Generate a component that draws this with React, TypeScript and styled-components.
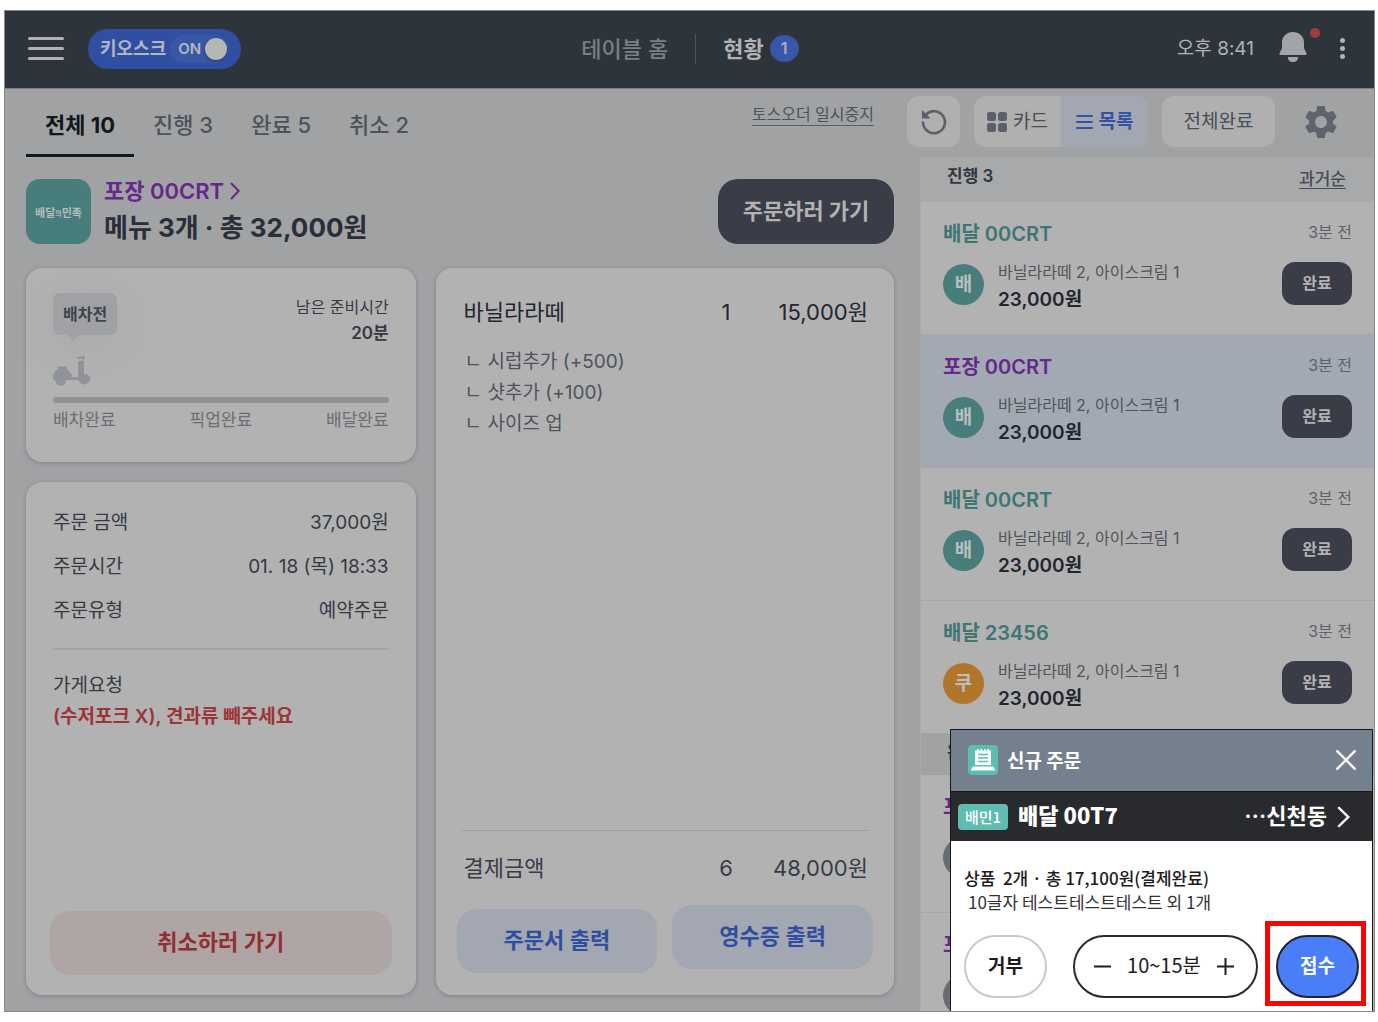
import React from "react";
import styled, { createGlobalStyle, css } from "styled-components";
import { MdSettings } from "react-icons/md";

const GlobalStyle = createGlobalStyle`
  *, *::before, *::after { box-sizing: border-box; }
  body {
    margin: 0;
    background: #ffffff;
    color: #2c313b;
    font-family: Inter, "Noto Sans CJK KR", sans-serif;
    overflow: hidden;
  }
  button, input { font: inherit; color: inherit; }
  button { border: 0; background: none; padding: 0; cursor: pointer; white-space: nowrap; }
  h1, h2, h3, p, ul, dl, dd { margin: 0; padding: 0; font-size: inherit; font-weight: inherit; }
  ul { list-style: none; }
`;

const Shell = styled.div`
  position: relative;
  display: flex;
  flex-direction: column;
  height: calc(100vh - 20px);
  margin: 10px 3px 10px 4px;
  border: 1px solid #87898b;
  background: #a1a2a4;
  overflow: hidden;
`;

/* ---------- top bar ---------- */

const TopBar = styled.header`
  display: grid;
  grid-template-columns: 1fr auto 1fr;
  align-items: center;
  height: 78px;
  padding: 0 22px 2px 23px;
  background: #2e343c;
  border-bottom: 1px solid #7b7f85;
`;

const TopLeft = styled.div`
  display: flex;
  align-items: center;
  gap: 24px;
`;

const MenuButton = styled.button`
  display: grid;
  gap: 7px;
  width: 36px;

  span {
    height: 3px;
    border-radius: 2px;
    background: #b2b2b2;
  }
`;

const KioskSwitch = styled.label`
  display: flex;
  align-items: center;
  gap: 4px;
  height: 40px;
  padding: 0 12px;
  border-radius: 20px;
  background: #304fa2;
  color: #b2b6c2;
  font-size: 18px;
  font-weight: 700;
  line-height: 24px;
  cursor: pointer;
`;

const SwitchTrack = styled.span`
  display: flex;
  align-items: center;
  gap: 4px;
  height: 28px;
  padding: 0 2px 0 8px;
  border-radius: 14px;
  background: #3858a6;
  font-size: 15px;
  font-weight: 600;
`;

const SwitchInput = styled.input`
  appearance: none;
  width: 22px;
  height: 22px;
  margin: 0;
  border-radius: 50%;
  background: #b5b5b5;
  box-shadow: 0 1px 3px rgba(0, 0, 0, 0.4);
`;

const TopNav = styled.nav`
  display: flex;
  align-items: center;
  font-size: 22px;
  line-height: 30px;
`;

const NavLink = styled.a<{ $active?: boolean }>`
  display: flex;
  align-items: center;
  gap: 6px;
  padding: 0 27px;
  color: ${(p) => (p.$active ? "#b2b2b2" : "#7b7f85")};
  font-weight: ${(p) => (p.$active ? 700 : 500)};
  text-decoration: none;

  & + & {
    border-left: 1px solid #4a5059;
  }
`;

const Count = styled.span`
  width: 29px;
  height: 27px;
  border-radius: 50%;
  background: #3857a8;
  color: #a9b0c4;
  font-size: 16px;
  font-weight: 600;
  line-height: 27px;
  text-align: center;
`;

const TopRight = styled.div`
  display: flex;
  align-items: center;
  justify-content: flex-end;
  color: #b2b2b2;
`;

const Clock = styled.time`
  font-size: 19px;
  line-height: 26px;
`;

const BellButton = styled.button`
  position: relative;
  display: flex;
  margin: 0 33px 4px 25px;

  &::after {
    content: "";
    position: absolute;
    top: -4px;
    right: -13px;
    width: 10px;
    height: 10px;
    border-radius: 50%;
    background: #a03c3e;
  }
`;

const MoreButton = styled.button`
  display: grid;
  gap: 3px;
  margin-right: 7px;

  span {
    width: 5px;
    height: 5px;
    border-radius: 50%;
    background: #b2b2b2;
  }
`;

/* ---------- filter bar ---------- */

const FilterBar = styled.div`
  display: flex;
  flex: none;
  justify-content: space-between;
  height: 69px;
  padding: 0 33px 0 21px;
  border-bottom: 1px solid #a6a7a9;
`;

const Tabs = styled.div`
  display: flex;
`;

const Tab = styled.button<{ $active?: boolean }>`
  padding: 7px 19px 0;
  border-bottom: 3px solid ${(p) => (p.$active ? "#14171c" : "transparent")};
  color: ${(p) => (p.$active ? "#14171c" : "#4d525b")};
  font-size: 22px;
  font-weight: ${(p) => (p.$active ? 700 : 500)};
  line-height: 30px;
`;

const Tools = styled.div`
  display: flex;
  align-items: flex-start;
  gap: 14px;
  padding-top: 7px;
`;

const PauseLink = styled.a`
  margin: 7px 19px 0 0;
  border-bottom: 1px solid #5a5f68;
  color: #4d525b;
  font-size: 16px;
  line-height: 22px;
  text-decoration: none;
`;

const ToolButton = styled.button<{ $width: number }>`
  display: flex;
  align-items: center;
  justify-content: center;
  width: ${(p) => p.$width}px;
  height: 51px;
  border-radius: 12px;
  background: #b0b0b0;
  color: #484d57;
  font-size: 19px;
  line-height: 26px;
`;

const Segmented = styled.div`
  display: flex;
  border-radius: 12px;
  background: #b0b0b0;
  overflow: hidden;
`;

const Segment = styled.button<{ $active?: boolean }>`
  display: flex;
  align-items: center;
  justify-content: center;
  gap: 6px;
  width: 87px;
  height: 51px;
  background: ${(p) => (p.$active ? "#a2a7b1" : "transparent")};
  color: ${(p) => (p.$active ? "#3453a6" : "#484d57")};
  font-size: 19px;
  font-weight: ${(p) => (p.$active ? 700 : 400)};
  line-height: 26px;
`;

const GearButton = styled.button`
  display: flex;
  margin: 6px 0 0 12px;
  color: #5f646c;
`;

/* ---------- layout of the two panes ---------- */

const Panes = styled.div`
  display: flex;
  flex: 1;
  min-height: 0;
`;

const Detail = styled.main`
  display: flex;
  flex: 1;
  flex-direction: column;
  gap: 23px;
  min-width: 0;
  padding: 21px 26px 16px 21px;
`;

const DetailHead = styled.div`
  display: flex;
  gap: 13px;
`;

const BrandMark = styled.div`
  display: flex;
  align-items: center;
  justify-content: center;
  width: 65px;
  height: 65px;
  border-radius: 14px;
  background: #477e7b;
  color: #b2bdbc;
  font-size: 11px;
  font-weight: 700;

  small {
    padding-top: 2px;
    font-size: 7px;
  }
`;

const OrderTitle = styled.div`
  flex: 1;
`;

const OrderLink = styled.a`
  display: flex;
  align-items: center;
  gap: 6px;
  color: #67288b;
  font-size: 22px;
  font-weight: 600;
  line-height: 24px;
  text-decoration: none;
`;

const OrderTotal = styled.h1`
  padding-top: 8px;
  color: #2a2e38;
  font-size: 26px;
  font-weight: 700;
  line-height: 34px;
`;

const DarkButton = styled.button<{ $large?: boolean }>`
  background: #3a3d48;
  color: #b2b2b2;
  font-weight: 700;
  ${(p) =>
    p.$large
      ? css`
          width: 176px;
          height: 65px;
          padding-bottom: 5px;
          border-radius: 20px;
          font-size: 22px;
        `
      : css`
          width: 70px;
          height: 43px;
          margin-top: 4px;
          padding-bottom: 3px;
          border-radius: 13px;
          font-size: 16px;
        `}
`;

const Cards = styled.div`
  display: grid;
  flex: 1;
  grid-template-columns: 17fr 20fr;
  gap: 20px;
  min-height: 0;
`;

const CardStack = styled.div`
  display: flex;
  flex-direction: column;
  gap: 20px;
`;

const Card = styled.section<{ $grow?: boolean }>`
  display: flex;
  flex-direction: column;
  ${(p) => p.$grow && "flex: 1;"}
  padding: 24px 24px 20px;
  border-radius: 16px;
  background: #b2b2b2;
  box-shadow: 0 1px 4px rgba(60, 65, 80, 0.35);
`;

/* ---------- delivery card ---------- */

const DeliveryTop = styled.div`
  display: flex;
  justify-content: space-between;
  align-items: flex-start;
  padding: 0 3px;
`;

const Bubble = styled.span`
  position: relative;
  margin-top: 1px;
  padding: 0 10px;
  border-radius: 7px;
  background: #9fa1a4;
  box-shadow: 0 10px 40px rgba(110, 130, 120, 0.16);
  color: #3f444e;
  font-size: 16px;
  font-weight: 700;
  line-height: 42px;

  &::after {
    content: "";
    position: absolute;
    top: 42px;
    left: 14px;
    border: 6px solid transparent;
    border-top-color: #9fa1a4;
    border-bottom: 0;
  }
`;

const Remaining = styled.p`
  padding-top: 2px;
  color: #353a44;
  font-size: 16px;
  line-height: 26px;
  text-align: right;

  strong {
    display: block;
    font-size: 17px;
    font-weight: 600;
  }
`;

const ScooterIcon = styled.svg`
  width: 38px;
  height: 31px;
  margin: 9px 0 11px 3px;
  fill: #919498;
`;

const Track = styled.div`
  height: 6px;
  margin: 0 3px;
  border-radius: 3px;
  background: #929397;
`;

const Steps = styled.ul`
  display: flex;
  justify-content: space-between;
  padding: 4px 3px 9px;
  color: #6b6f75;
  font-size: 17px;
  line-height: 26px;
`;

/* ---------- order info card ---------- */

const InfoList = styled.dl`
  display: grid;
  gap: 18px;
  margin: 4px 3px 20px;
  padding-bottom: 24px;
  border-bottom: 2px solid #a4a5a6;
  color: #353a44;
  font-size: 19px;
  line-height: 26px;

  div {
    display: flex;
    justify-content: space-between;
  }
`;

const Request = styled.div`
  flex: 1;
  padding: 0 3px;
  color: #353a44;
  font-size: 19px;
  line-height: 31px;

  strong {
    display: block;
    color: #9c3538;
    font-weight: 600;
  }
`;

const WideButton = styled.button<{ $tone: "red" | "blue" }>`
  flex: none;
  height: 64px;
  padding-bottom: 3px;
  border-radius: 20px;
  background: ${(p) => (p.$tone === "red" ? "#afa5a5" : "#a2a7b1")};
  color: ${(p) => (p.$tone === "red" ? "#912e31" : "#304e9f")};
  font-size: 22px;
  font-weight: 600;
  line-height: 30px;
`;

/* ---------- receipt card ---------- */

const ReceiptBody = styled.div`
  display: flex;
  flex: 1;
  flex-direction: column;
  padding: 5px 2px 0;
`;

const Line = styled.div<{ $total?: boolean }>`
  display: grid;
  grid-template-columns: 1fr 40px 122px;
  padding: 0 0 0 2px;
  color: ${(p) => (p.$total ? "#383c47" : "#22262f")};
  font-size: 22px;
  line-height: 30px;

  span:nth-child(2) {
    text-align: center;
  }
  span:last-child {
    text-align: right;
  }
`;

const Options = styled.ul`
  flex: 1;
  padding: 19px 3px 0;
  color: #4e535d;
  font-size: 19px;
  line-height: 31px;
`;

const Rule = styled.hr`
  width: 100%;
  margin: 0 0 22px;
  border: 0;
  border-top: 1px solid #9b9da0;
`;

const PrintRow = styled.div`
  display: flex;
  gap: 15px;
  height: 68px;
  margin: 22px -3px 2px;

  button {
    flex: 1;
  }
  button:first-child {
    align-self: flex-end;
  }
`;

/* ---------- order queue ---------- */

const Queue = styled.aside`
  flex: 0 0 454px;
  border-left: 1px solid #a9aaab;
  background: #b2b2b2;
  overflow: hidden;
`;

const QueueHead = styled.div<{ $muted?: boolean }>`
  display: flex;
  justify-content: space-between;
  height: ${(p) => (p.$muted ? 41 : 44)}px;
  padding: 6px 28px 0 26px;
  background: ${(p) => (p.$muted ? "#a1a2a4" : "#a8a9ab")};
  color: #31363f;
  font-size: 17px;
  font-weight: 600;
  line-height: 24px;
`;

const SortButton = styled.button`
  height: 28px;
  padding-top: 2px;
  color: #484d57;
  font-weight: 500;
  text-decoration: underline;
  text-underline-offset: 3px;
`;

const QueueItem = styled.li<{ $selected?: boolean; $done?: boolean }>`
  height: ${(p) => (p.$done ? 138 : 133)}px;
  padding: 18px 22px 0;
  border-bottom: 1px solid #a5a6a8;
  background: ${(p) => (p.$selected ? "#a2a9b2" : "transparent")};
`;

const ItemHead = styled.div`
  display: flex;
  justify-content: space-between;
  line-height: 28px;
`;

const ItemName = styled.h3<{ $pickup?: boolean }>`
  color: ${(p) => (p.$pickup ? "#67288b" : "#3d7672")};
  font-size: 20px;
  font-weight: 600;
`;

const Ago = styled.span`
  color: #5d6168;
  font-size: 16px;
  line-height: 24px;
`;

const ItemBody = styled.div`
  display: flex;
  align-items: flex-start;
  gap: 14px;
  padding-top: 10px;
`;

const Avatar = styled.span<{ $color: string }>`
  width: 41px;
  height: 41px;
  margin-top: 6px;
  border-radius: 50%;
  background: ${(p) => p.$color};
  color: #b8bfbe;
  font-size: 19px;
  font-weight: 700;
  line-height: 41px;
  text-align: center;
`;

const Summary = styled.p`
  flex: 1;
  color: #50555d;
  font-size: 16px;
  line-height: 28px;

  strong {
    display: block;
    color: #22262f;
    font-size: 19px;
    font-weight: 600;
  }
`;

/* ---------- new order popup ---------- */

const Popup = styled.section`
  position: absolute;
  right: 1px;
  bottom: 0;
  width: 423px;
  border: 1px solid #17181a;
  border-bottom: 0;
  background: #ffffff;
  color: #1c1c1e;
  font-family: "Noto Sans CJK KR", sans-serif;
`;

const PopupTitle = styled.div`
  display: flex;
  align-items: center;
  gap: 9px;
  height: 62px;
  padding: 0 16px 2px 17px;
  border-bottom: 1px solid #17181a;
  background: #75808f;
  color: #ffffff;
  font-size: 19px;
  font-weight: 700;

  h2 {
    flex: 1;
  }
`;

const IconButton = styled.button`
  display: flex;
`;

const PopupOrder = styled.a`
  display: flex;
  align-items: center;
  height: 49px;
  padding: 0 22px 0 7px;
  background: #292a2e;
  color: #ffffff;
  font-size: 22px;
  font-weight: 700;
  line-height: 24px;
  text-decoration: none;

  strong {
    flex: 1;
    padding: 0 0 6px 10px;
  }
`;

const Tag = styled.span`
  width: 50px;
  border-radius: 4px;
  background: #5fbcb1;
  font-size: 15px;
  font-weight: 500;
  line-height: 26px;
  text-align: center;
`;

const District = styled.span`
  display: flex;
  align-items: center;
  gap: 10px;

  span {
    padding-bottom: 6px;
  }
`;

const PopupText = styled.p`
  padding: 25px 13px 21px;
  font-size: 17px;
  font-weight: 500;
  line-height: 24px;
  white-space: pre-wrap;

  span {
    display: block;
    padding-left: 4px;
    color: #333333;
    font-weight: 400;
  }
`;

const PopupActions = styled.div`
  display: flex;
  align-items: center;
  justify-content: space-between;
  padding: 0 13px 13px;
  font-size: 19px;
`;

const Reject = styled.button`
  width: 83px;
  height: 63px;
  padding-bottom: 5px;
  border: 2px solid #c9c9c9;
  border-radius: 32px;
  font-weight: 700;
`;

const Stepper = styled.div`
  display: flex;
  align-items: center;
  justify-content: space-between;
  width: 185px;
  height: 63px;
  margin-left: 8px;
  padding: 0 22px 0 19px;
  border: 2px solid #2b2b2d;
  border-radius: 32px;
  font-size: 20px;

  span {
    padding-bottom: 4px;
  }
`;

const Accept = styled.button`
  position: relative;
  width: 83px;
  height: 63px;
  padding-bottom: 5px;
  border: 2px solid #20242c;
  border-radius: 32px;
  background: #4a7df8;
  color: #ffffff;
  font-weight: 700;

  &::after {
    content: "";
    position: absolute;
    inset: -16px -9px -10px -13px;
    border: 5px solid #ff0000;
  }
`;

type Order = { name: string; color: string; mark: string; selected?: boolean };

const active: Order[] = [
  { name: "배달 00CRT", color: "#477e7b", mark: "배" },
  { name: "포장 00CRT", color: "#477e7b", mark: "배", selected: true },
  { name: "배달 00CRT", color: "#477e7b", mark: "배" },
  { name: "배달 23456", color: "#b2762a", mark: "쿠" },
];

const done: Order[] = [
  { name: "포장", color: "#686c73", mark: "" },
  { name: "포장", color: "#686c73", mark: "" },
];

const info = [
  ["주문 금액", "37,000원"],
  ["주문시간", "01. 18 (목) 18:33"],
  ["주문유형", "예약주문"],
];

const Chevron = ({ width, height }: { width: number; height: number }) => (
  <svg width={width} height={height} viewBox="0 0 12 22" preserveAspectRatio="none" fill="none" stroke="currentColor" strokeWidth="2.4" aria-hidden="true">
    <path d="M1.2 1.2 10.4 11 1.2 20.8" />
  </svg>
);

function QueueRow({ order }: { order: Order }) {
  return (
    <QueueItem $selected={order.selected}>
      <ItemHead>
        <ItemName $pickup={order.name.startsWith("포장")}>{order.name}</ItemName>
        <Ago>3분 전</Ago>
      </ItemHead>
      <ItemBody>
        <Avatar $color={order.color}>{order.mark}</Avatar>
        <Summary>
          바닐라라떼 2, 아이스크림 1<strong>23,000원</strong>
        </Summary>
        <DarkButton>완료</DarkButton>
      </ItemBody>
    </QueueItem>
  );
}

function DoneRow({ order }: { order: Order }) {
  return (
    <QueueItem $done>
      <ItemHead>
        <ItemName $pickup>{order.name}</ItemName>
      </ItemHead>
      <ItemBody>
        <Avatar $color={order.color}>{order.mark}</Avatar>
      </ItemBody>
    </QueueItem>
  );
}

export default function App() {
  return (
    <>
      <GlobalStyle />
      <Shell>
        <TopBar>
          <TopLeft>
            <MenuButton aria-label="메뉴">
              <span />
              <span />
              <span />
            </MenuButton>
            <KioskSwitch>
              키오스크
              <SwitchTrack>
                ON
                <SwitchInput type="checkbox" role="switch" defaultChecked />
              </SwitchTrack>
            </KioskSwitch>
          </TopLeft>
          <TopNav>
            <NavLink href="#home">테이블 홈</NavLink>
            <NavLink href="#status" $active>
              현황 <Count>1</Count>
            </NavLink>
          </TopNav>
          <TopRight>
            <Clock>오후 8:41</Clock>
            <BellButton aria-label="알림">
              <svg width="28" height="30" viewBox="0 0 28 30" fill="#a3a4a7" aria-hidden="true">
                <path d="M14 0C7.800 0 3 4.600 3 10.500V16L.6 21.200C.2 22 .6 23 1.600 23H26.400C27.400 23 27.800 22 27.400 21.200L25 16V10.500C25 4.600 20.200 0 14 0Z" />
                <path d="M8.800 25H19.200C19.200 28 17 30 14 30S8.800 28 8.800 25Z" />
              </svg>
            </BellButton>
            <MoreButton aria-label="더보기">
              <span />
              <span />
              <span />
            </MoreButton>
          </TopRight>
        </TopBar>

        <FilterBar>
          <Tabs role="tablist">
            <Tab role="tab" aria-selected="true" $active>전체 10</Tab>
            <Tab role="tab">진행 3</Tab>
            <Tab role="tab">완료 5</Tab>
            <Tab role="tab">취소 2</Tab>
          </Tabs>
          <Tools>
            <PauseLink href="#pause">토스오더 일시중지</PauseLink>
            <ToolButton $width={53} aria-label="새로고침">
              <svg width="26" height="26" viewBox="0 0 26 26" fill="none" stroke="#5b6069" strokeWidth="2.6" strokeLinecap="round" aria-hidden="true">
                <path d="M2 13.500A11 11 0 1 0 5 5.600" />
                <path d="M1.500 2.200V9H8.300Z" fill="#5b6069" stroke="#5b6069" strokeWidth="1.200" strokeLinejoin="round" />
              </svg>
            </ToolButton>
            <Segmented>
              <Segment>
                <svg width="20" height="20" viewBox="0 0 20 20" fill="#5b6069" aria-hidden="true">
                  <rect x="0" y="0" width="9" height="9" rx="2.500" />
                  <rect x="11" y="0" width="9" height="9" rx="2.500" />
                  <rect x="0" y="11" width="9" height="9" rx="2.500" />
                  <rect x="11" y="11" width="9" height="9" rx="2.500" />
                </svg>
                카드
              </Segment>
              <Segment $active>
                <svg width="17" height="16" viewBox="0 0 17 16" stroke="currentColor" strokeWidth="2" strokeLinecap="round" aria-hidden="true">
                  <path d="M1 2H16M1 8H16M1 14H16" />
                </svg>
                목록
              </Segment>
            </Segmented>
            <ToolButton $width={113}>전체완료</ToolButton>
            <GearButton aria-label="설정">
              <MdSettings size={40} />
            </GearButton>
          </Tools>
        </FilterBar>

        <Panes>
          <Detail>
            <DetailHead>
              <BrandMark>
                배달<small>의</small>민족
              </BrandMark>
              <OrderTitle>
                <OrderLink href="#order">
                  포장 00CRT <Chevron width={10} height={18} />
                </OrderLink>
                <OrderTotal>메뉴 3개 · 총 32,000원</OrderTotal>
              </OrderTitle>
              <DarkButton $large>주문하러 가기</DarkButton>
            </DetailHead>

            <Cards>
              <CardStack>
                <Card>
                  <DeliveryTop>
                    <Bubble>배차전</Bubble>
                    <Remaining>
                      남은 준비시간<strong>20분</strong>
                    </Remaining>
                  </DeliveryTop>
                  <ScooterIcon viewBox="0 0 38 31" aria-hidden="true">
                    <path d="M5 11.500H14V14.500C17 16 19 19 19 22H25V8C25 6.500 26 5.800 27 5.800H29C30.400 5.800 31 7 31 8V19C34.500 19 37.500 21 37.700 24.500L36 26A5.200 5.200 0 0 1 26.200 26L25 25H13A5.200 5.200 0 0 1 2.500 26L0 24.500V22C0 18.500 2 15.500 5 14.500Z" />
                    <path d="M24 1.800H28.500L31.500 0V5L28.500 3.800H24Z" />
                  </ScooterIcon>
                  <Track />
                  <Steps>
                    <li>배차완료</li>
                    <li>픽업완료</li>
                    <li>배달완료</li>
                  </Steps>
                </Card>

                <Card $grow>
                  <InfoList>
                    {info.map(([label, value]) => (
                      <div key={label}>
                        <dt>{label}</dt>
                        <dd>{value}</dd>
                      </div>
                    ))}
                  </InfoList>
                  <Request>
                    가게요청<strong>(수저포크 X), 견과류 빼주세요</strong>
                  </Request>
                  <WideButton $tone="red">취소하러 가기</WideButton>
                </Card>
              </CardStack>

              <Card>
                <ReceiptBody>
                  <Line>
                    <span>바닐라라떼</span>
                    <span>1</span>
                    <span>15,000원</span>
                  </Line>
                  <Options>
                    <li>ㄴ 시럽추가 (+500)</li>
                    <li>ㄴ 샷추가 (+100)</li>
                    <li>ㄴ 사이즈 업</li>
                  </Options>
                  <Rule />
                  <Line $total>
                    <span>결제금액</span>
                    <span>6</span>
                    <span>48,000원</span>
                  </Line>
                </ReceiptBody>
                <PrintRow>
                  <WideButton $tone="blue">주문서 출력</WideButton>
                  <WideButton $tone="blue">영수증 출력</WideButton>
                </PrintRow>
              </Card>
            </Cards>
          </Detail>

          <Queue>
            <QueueHead>
              <h2>진행 3</h2>
              <SortButton>과거순</SortButton>
            </QueueHead>
            <ul>
              {active.map((order, i) => (
                <QueueRow key={i} order={order} />
              ))}
            </ul>
            <QueueHead $muted>
              <h2>완료 5</h2>
            </QueueHead>
            <ul>
              {done.map((order, i) => (
                <DoneRow key={i} order={order} />
              ))}
            </ul>
          </Queue>
        </Panes>

        <Popup role="dialog" aria-label="신규 주문">
          <PopupTitle>
            <svg width="30" height="30" viewBox="0 0 30 30" aria-hidden="true">
              <rect width="30" height="30" rx="4" fill="#5dbdb1" />
              <path d="M7 5.500H9V4H10.500V5.500H12.500V4H14V5.500H16V4H17.500V5.500H19.500V4H21V5.500H23V20H7Z" fill="#fff" />
              <path d="M5 21.500H25L27.500 25.500H2.500Z" fill="#fff" />
              <path d="M10 9.500H20M10 13H20M10 16.500H20" stroke="#5dbdb1" strokeWidth="1.500" />
            </svg>
            <h2>신규 주문</h2>
            <IconButton aria-label="닫기">
              <svg width="20" height="20" viewBox="0 0 20 20" stroke="#fff" strokeWidth="2.400" strokeLinecap="round" aria-hidden="true">
                <path d="M1.200 1.200 18.800 18.800M18.800 1.200 1.200 18.800" />
              </svg>
            </IconButton>
          </PopupTitle>
          <PopupOrder href="#new-order">
            <Tag>배민1</Tag>
            <strong>배달 00T7</strong>
            <District>
              <span>…신천동</span>
              <Chevron width={13} height={22} />
            </District>
          </PopupOrder>
          <PopupText>
            상품  2개 · 총 17,100원(결제완료)
            <span>10글자 테스트테스트테스트 외 1개</span>
          </PopupText>
          <PopupActions>
            <Reject>거부</Reject>
            <Stepper>
              <IconButton aria-label="시간 줄이기">
                <svg width="17" height="17" viewBox="0 0 17 17" stroke="#1c1c1e" strokeWidth="2" aria-hidden="true">
                  <path d="M0 8.500H17" />
                </svg>
              </IconButton>
              <span>10~15분</span>
              <IconButton aria-label="시간 늘리기">
                <svg width="17" height="17" viewBox="0 0 17 17" stroke="#1c1c1e" strokeWidth="2" aria-hidden="true">
                  <path d="M0 8.500H17M8.500 0V17" />
                </svg>
              </IconButton>
            </Stepper>
            <Accept>접수</Accept>
          </PopupActions>
        </Popup>
      </Shell>
    </>
  );
}
